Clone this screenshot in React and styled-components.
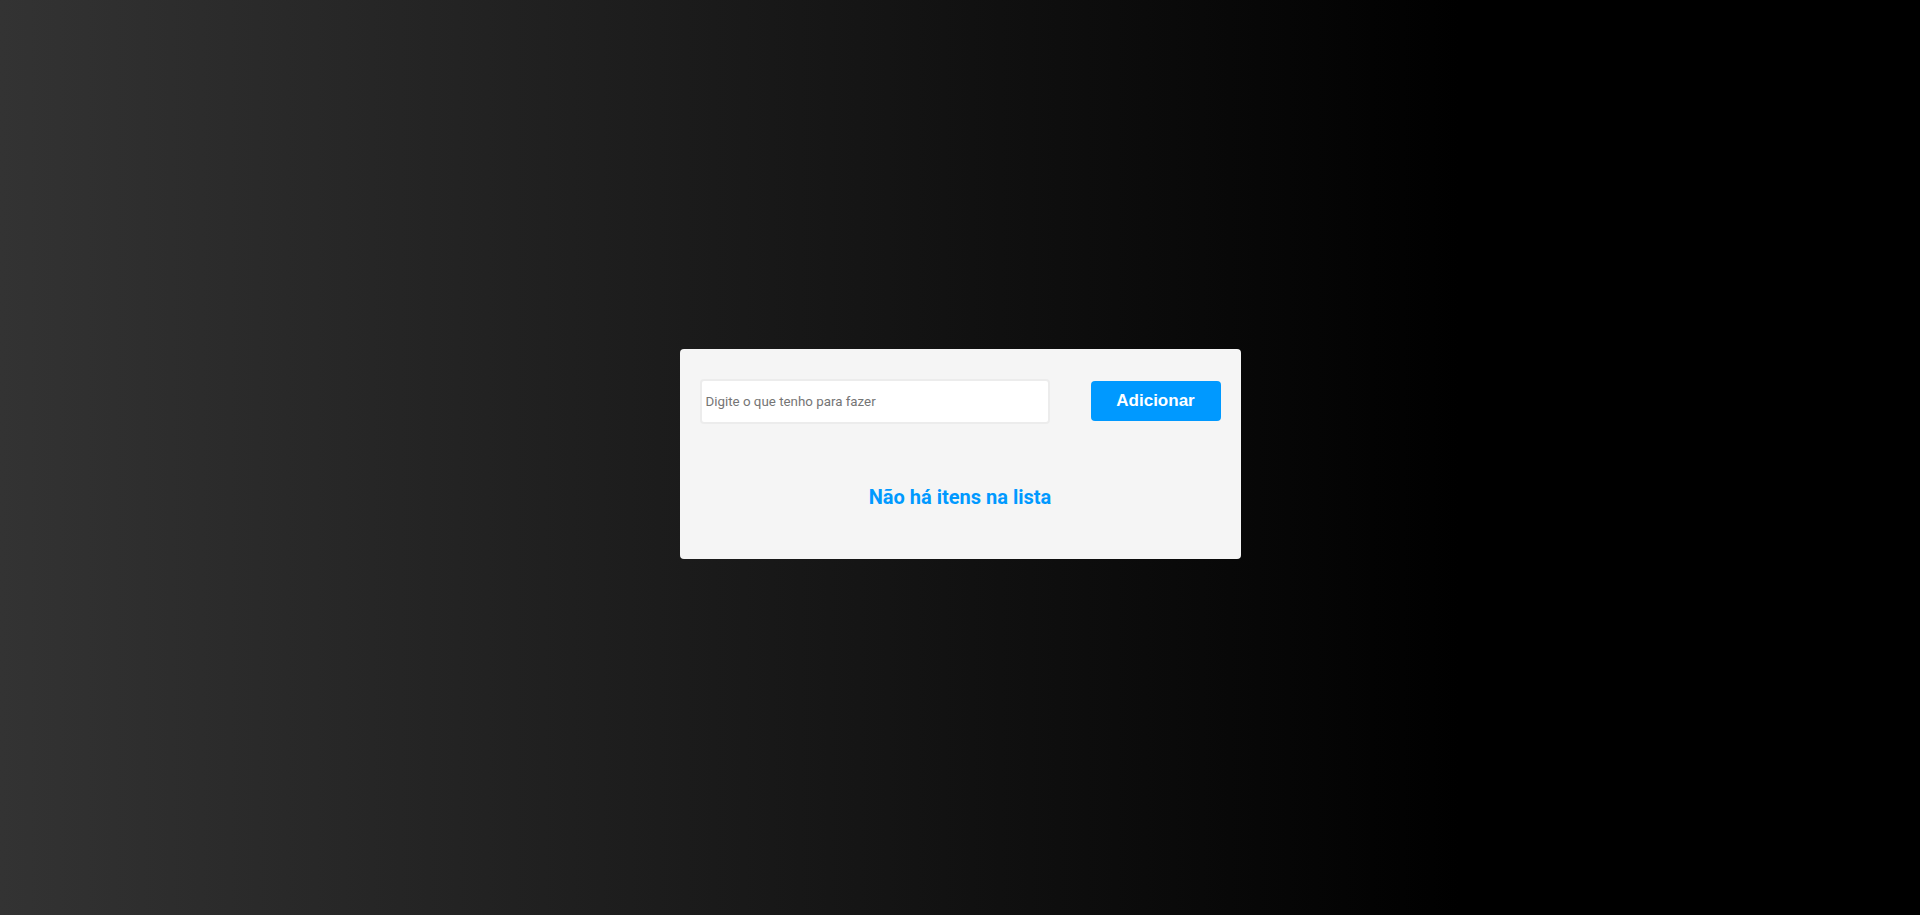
import styled, { createGlobalStyle } from "styled-components";
import { useState } from "react";

const GlobalStyle = createGlobalStyle`
  * {
    box-sizing: border-box;
  }

  html,
  body {
    margin: 0;
    padding: 0;
  }

  body {
    min-height: 100vh;
    font-family: "Roboto", "Liberation Sans", sans-serif;
    background: linear-gradient(to right, #333333 0%, #000000 76%);
  }
`;

const Page = styled.main`
  min-height: 100vh;
  display: flex;
  align-items: center;
  justify-content: center;
`;

const Card = styled.section`
  width: 561px;
  padding: 30px 20px;
  background: #f5f5f5;
  border-radius: 4px;
  transform: translateY(-4px);
`;

const Form = styled.form`
  display: flex;
  align-items: center;
  justify-content: space-between;
`;

const Input = styled.input`
  width: 350px;
  height: 45px;
  padding: 0 4px;
  border: 2px solid #ececec;
  border-radius: 4px;
  background: #fff;
  font-family: "Roboto", sans-serif;
  font-size: 13.33px;
  color: #333;
  outline: none;

  &::placeholder {
    color: #757575;
  }
`;

const Button = styled.button`
  width: 130px;
  height: 40px;
  border: none;
  border-radius: 4px;
  background: #0099ff;
  color: #fff;
  font-family: "Liberation Sans", Arial, sans-serif;
  font-size: 17px;
  font-weight: 700;
  cursor: pointer;
`;

const Empty = styled.p`
  margin: 62px 0 20px;
  text-align: center;
  font-family: "Roboto", sans-serif;
  font-size: 20px;
  line-height: 23px;
  font-weight: 700;
  color: #0099ff;
`;

const List = styled.ul`
  margin: 30px 0 0;
  padding: 0;
  list-style: none;
`;

const Item = styled.li`
  padding: 10px 4px;
  border-bottom: 1px solid #e4e4e4;
  font-size: 16px;
  color: #333;
`;

export default function App() {
  const [text, setText] = useState("");
  const [items, setItems] = useState([]);

  function handleSubmit(e) {
    e.preventDefault();
    if (!text.trim()) return;
    setItems((items) => [...items, text.trim()]);
    setText("");
  }

  return (
    <>
      <GlobalStyle />
      <Page>
        <Card>
          <Form onSubmit={handleSubmit}>
            <Input
              placeholder="Digite o que tenho para fazer"
              value={text}
              onChange={(e) => setText(e.target.value)}
            />
            <Button type="submit">Adicionar</Button>
          </Form>
          {items.length === 0 ? (
            <Empty>Não há itens na lista</Empty>
          ) : (
            <List>
              {items.map((item, i) => (
                <Item key={i}>{item}</Item>
              ))}
            </List>
          )}
        </Card>
      </Page>
    </>
  );
}
